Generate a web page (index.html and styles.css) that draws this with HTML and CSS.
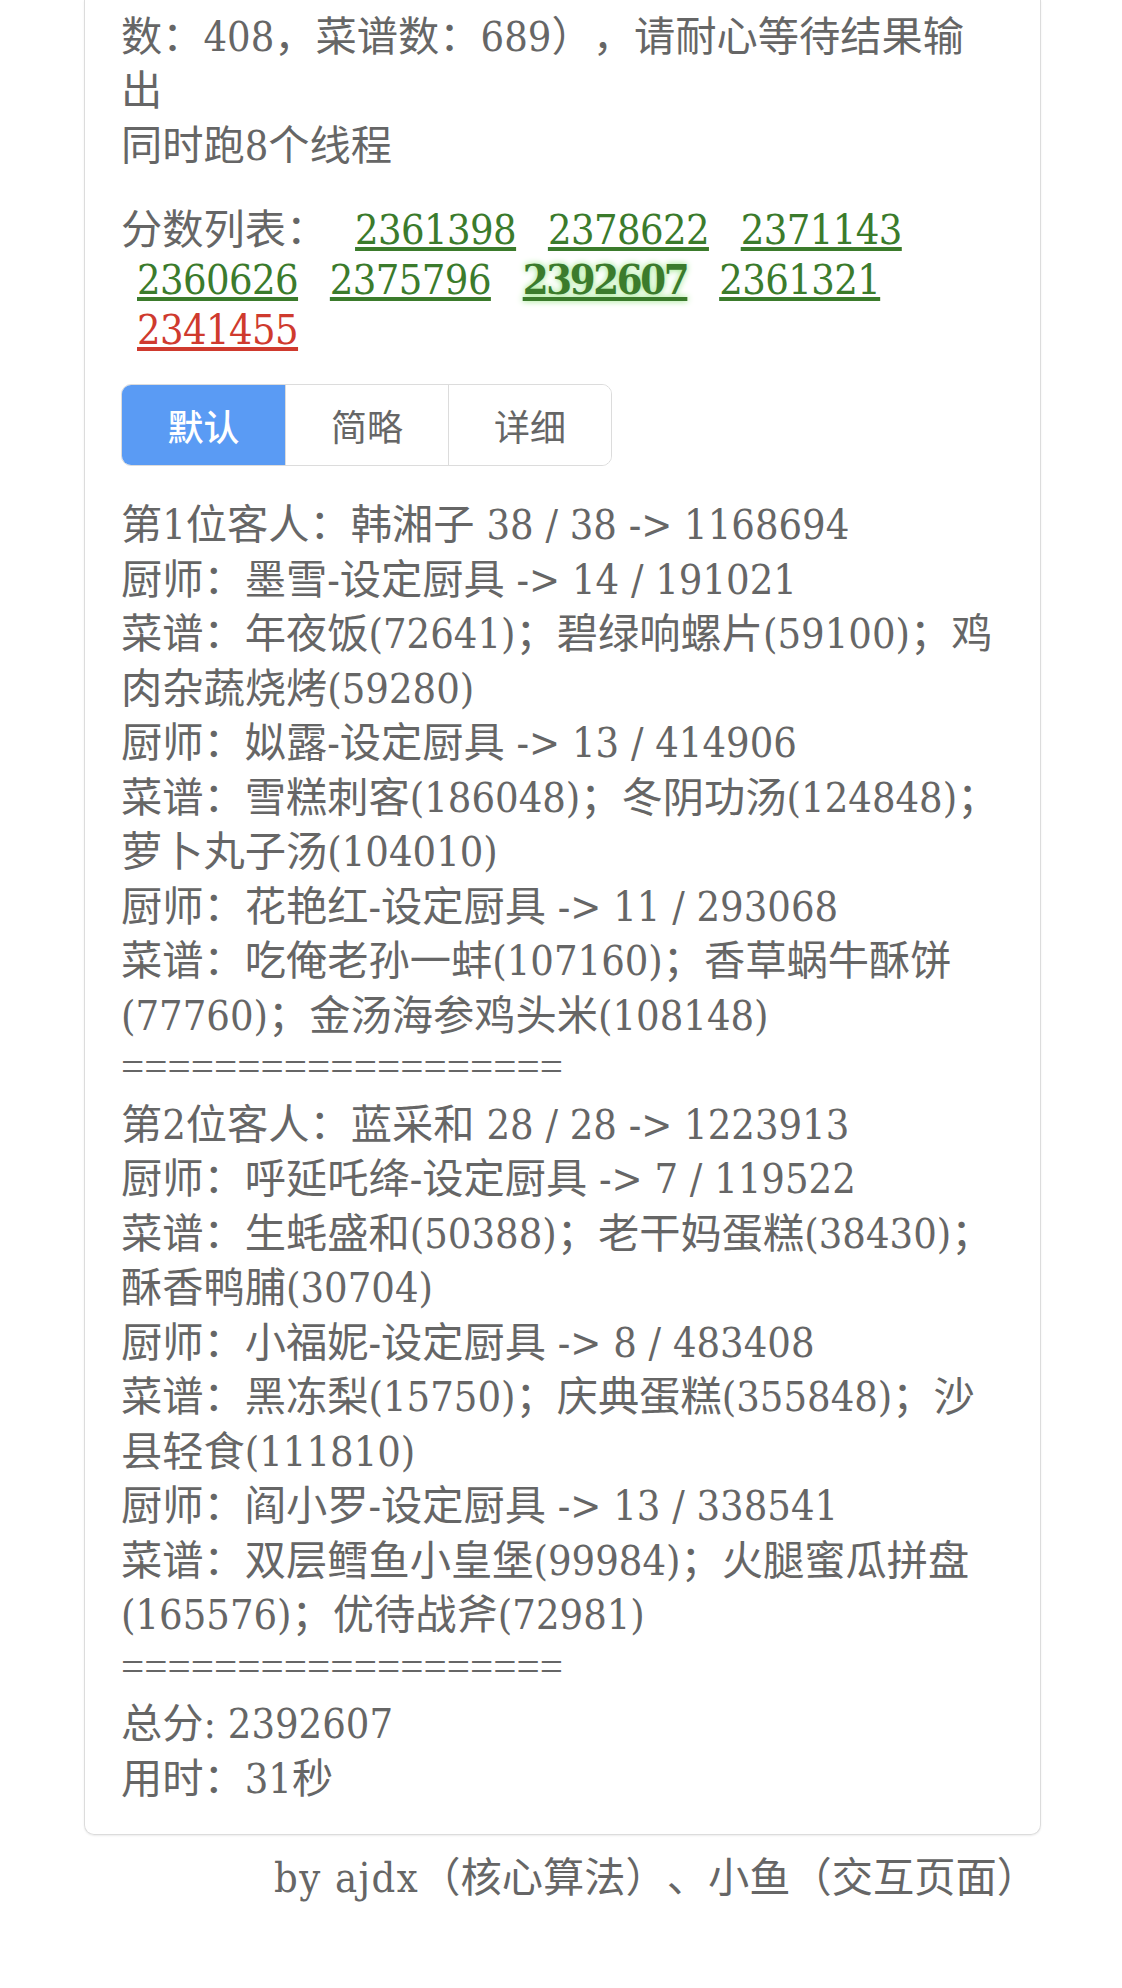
FILE: index.html
```html
<!DOCTYPE html>
<html lang="zh-CN">

<head>
    <meta charset="UTF-8">
    <meta name="viewport" content="width=device-width, initial-scale=1.0">
    <title>计算结果</title>
    <link rel="stylesheet" href="styles.css">
</head>

<body>
    <div class="page">
        <div class="card">
            <div class="status">
                数：408，菜谱数：689），请耐心等待结果输出<br>
                同时跑8个线程
            </div>

            <div class="scores">分数列表： <a class="score">2361398</a> <a class="score">2378622</a> <a class="score">2371143</a> <a class="score">2360626</a> <a class="score">2375796</a> <a class="score best">2392607</a> <a class="score">2361321</a> <a class="score low">2341455</a></div>

            <div class="modes">
                <button class="mode active">默认</button><button class="mode">简略</button><button class="mode">详细</button>
            </div>

            <div class="result">
                <div>第1位客人：韩湘子 38 / 38 -&gt; 1168694</div>
                <div>厨师：墨雪-设定厨具 -&gt; 14 / 191021</div>
                <div>菜谱：年夜饭(72641)；碧绿响螺片(59100)；鸡肉杂蔬烧烤(59280)</div>
                <div>厨师：姒露-设定厨具 -&gt; 13 / 414906</div>
                <div>菜谱：雪糕刺客(186048)；冬阴功汤(124848)；萝卜丸子汤(104010)</div>
                <div>厨师：花艳红-设定厨具 -&gt; 11 / 293068</div>
                <div>菜谱：吃俺老孙一蚌(107160)；香草蜗牛酥饼(77760)；金汤海参鸡头米(108148)</div>
                <div class="sep">===================</div>
                <div>第2位客人：蓝采和 28 / 28 -&gt; 1223913</div>
                <div>厨师：呼延吒绛-设定厨具 -&gt; 7 / 119522</div>
                <div>菜谱：生蚝盛和(50388)；老干妈蛋糕(38430)；酥香鸭脯(30704)</div>
                <div>厨师：小福妮-设定厨具 -&gt; 8 / 483408</div>
                <div>菜谱：黑冻梨(15750)；庆典蛋糕(355848)；沙县轻食(111810)</div>
                <div>厨师：阎小罗-设定厨具 -&gt; 13 / 338541</div>
                <div>菜谱：双层鳕鱼小皇堡(99984)；火腿蜜瓜拼盘(165576)；优待战斧(72981)</div>
                <div class="sep">===================</div>
                <div>总分: 2392607</div>
                <div>用时：31秒</div>
            </div>
        </div>

        <div class="footer"><span class="by">by ajdx</span>（核心算法）、小鱼（交互页面）</div>
    </div>
</body>

</html>
```

FILE: styles.css
```css
body {
    margin: 0;
    background-color: #fff;
    color: #666;
    font-family: "DejaVu Serif Condensed", "Noto Serif", "Liberation Serif", "Noto Sans CJK SC", serif;
    font-size: 41.25px;
    line-height: 54.5px;
    text-spacing-trim: space-all;
}

.page {
    padding: 0 81px 0 84px;
}

div.card {
    border: 1px solid #dcdcdc;
    border-top: none;
    border-radius: 0 0 10px 10px;
    box-shadow: 0 1px 2px rgba(0, 0, 0, 0.08);
    padding: 9.5px 38px 28px 36px;
}

.status {
    margin-bottom: 31.5px;
}

.scores {
    line-height: 50px;
    margin-bottom: 29.5px;
}

.score {
    margin: 0 4px 0 16px;
    color: #3b7b2c;
    letter-spacing: -0.6px;
    text-decoration: underline;
    cursor: pointer;
}

.score.best {
    font-weight: bold;
    letter-spacing: -2.3px;
    text-shadow: 0 0 6px #8ee27a;
}

.score.low {
    color: #cf3a2e;
}

.modes {
    display: inline-flex;
    border: 1px solid #dcdcdc;
    border-radius: 10px;
    overflow: hidden;
    margin-bottom: 32px;
    vertical-align: top;
}

.mode {
    width: 163px;
    height: 80px;
    border: none;
    border-left: 1px solid #dcdcdc;
    background-color: #fff;
    color: #666;
    font-family: "Noto Sans CJK SC", sans-serif;
    font-size: 36px;
    padding: 0;
    cursor: pointer;
}

.mode:first-child {
    border-left: none;
}

.mode.active {
    background-color: #5a9bf4;
    color: #fff;
    font-weight: 500;
}

.sep {
    font-family: "Liberation Serif", serif;
    line-height: 46.5px;
    padding-bottom: 8px;
}

.footer {
    margin-top: 16px;
    padding-right: 3px;
    text-align: right;
}

.footer .by {
    letter-spacing: 1.5px;
}
```
